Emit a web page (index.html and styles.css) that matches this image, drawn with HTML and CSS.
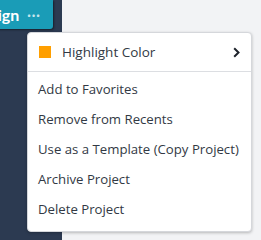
FILE: index.html
```html
<!DOCTYPE html>
<html lang="en">
<head>
    <meta charset="UTF-8">
    <title>Project menu</title>
    <link rel="stylesheet" href="styles.css">
</head>
<body>
    <div class="app">
        <aside class="sidebar">
            <div class="toolbar">
                <button class="design-btn">Design <span class="dots">&middot;&middot;&middot;</span></button>
            </div>
        </aside>
        <main class="content"></main>
    </div>

    <div class="menu">
        <div class="menu-head">
            <span class="swatch"></span>
            <span class="menu-label">Highlight Color</span>
            <svg class="chev" width="7" height="11" viewBox="0 0 7 11">
                <path d="M1.2 1.2 L5.5 5.5 L1.2 9.8" fill="none" stroke="#1e232b" stroke-width="2"/>
            </svg>
        </div>
        <ul class="menu-list">
            <li>Add to Favorites</li>
            <li>Remove from Recents</li>
            <li>Use as a Template (Copy Project)</li>
            <li>Archive Project</li>
            <li>Delete Project</li>
        </ul>
    </div>
</body>
</html>
```

FILE: styles.css
```css
body {
    margin: 0;
    font-family: "Open Sans", Lato, sans-serif;
    background-color: #f2f3f5;
    overflow: hidden;
}

.app {
    display: grid;
    grid-template-columns: 62px 1fr;
    height: 240px;
}

.sidebar {
    background-color: #2c3a51;
    overflow: hidden;
}

.toolbar {
    display: flex;
    margin-left: -38px;
}

.design-btn {
    display: flex;
    align-items: center;
    gap: 8px;
    height: 29px;
    padding: 0 12px 0 8px;
    border: none;
    border-radius: 0 0 3px 0;
    background-color: #1a9cb7;
    color: #fff;
    font-family: Lato, sans-serif;
    font-size: 16px;
    font-weight: 700;
    box-shadow: 1px 1px 2px rgba(0, 0, 0, 0.45);
    white-space: nowrap;
}

.dots {
    font-size: 13px;
    letter-spacing: 1px;
    opacity: 0.75;
}

/* popover menu, sits over the page */
.menu {
    position: absolute;
    left: 27px;
    top: 32px;
    width: 223px;
    background-color: #fff;
    border: 1px solid #d5d7db;
    border-radius: 4px;
    box-shadow: 0 1px 3px rgba(0, 0, 0, 0.25);
    color: #323944;
    font-size: 13.2px;
}

.menu-head {
    display: flex;
    align-items: center;
    height: 38px;
    padding: 0 11px 0 11px;
    border-bottom: 1px solid #dcdee2;
}

.swatch {
    width: 12px;
    height: 12px;
    background-color: #ff9f00;
    margin-right: 11px;
}

.menu-label {
    flex: 1;
    font-size: 13.5px;
}

.menu-list {
    list-style: none;
    margin: 0;
    padding: 2px 0 7px;
}

.menu-list li {
    height: 30px;
    line-height: 30px;
    padding-left: 10px;
}
```
